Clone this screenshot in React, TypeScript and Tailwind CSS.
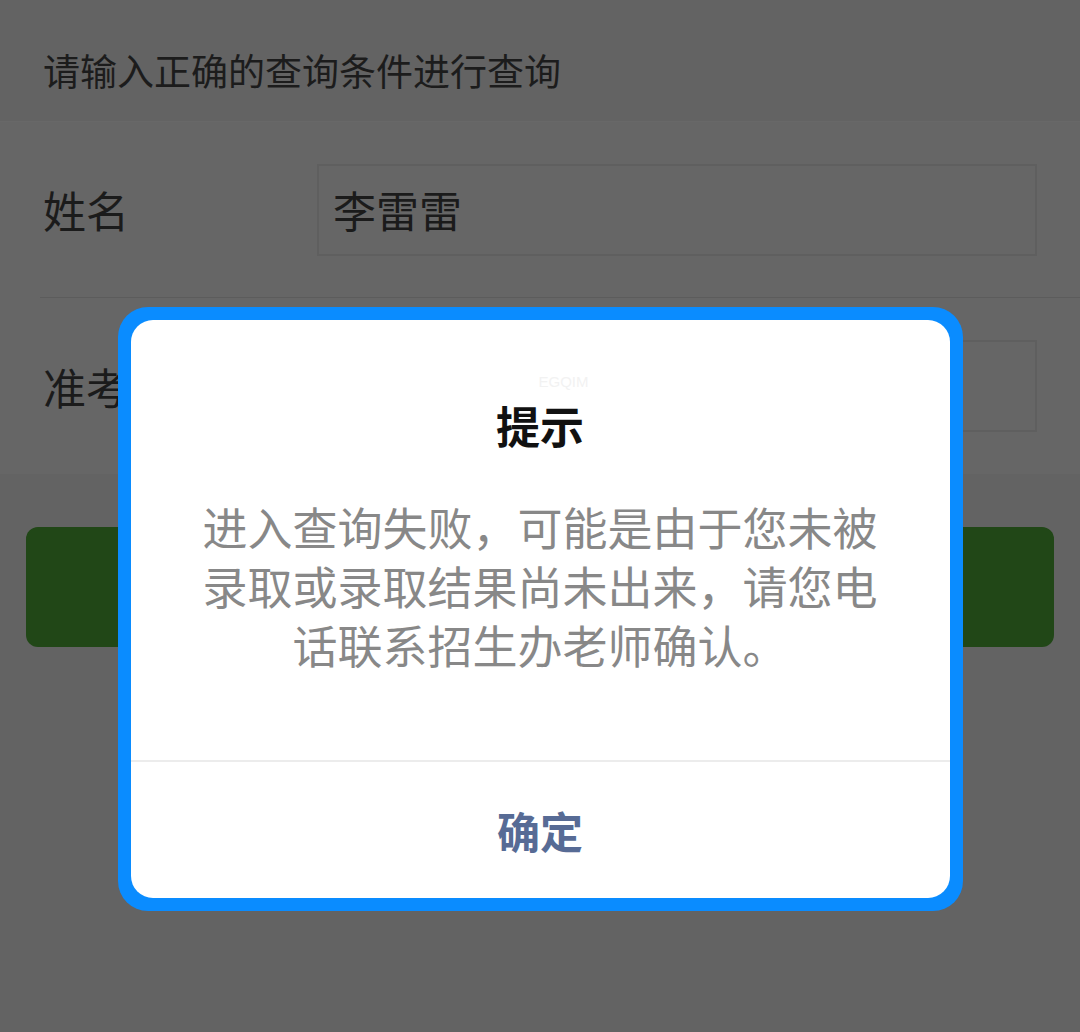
const font = "font-['Noto_Sans_CJK_SC','Noto_Sans',sans-serif]";

function FormRow({ label, value, last }: { label: string; value?: string; last?: boolean }) {
  return (
    <div className={`flex items-center ml-[40px] h-[176px] ${last ? "" : "border-b border-[#5c5c5c]"}`}>
      <div className="w-[277px] pl-[3px] text-[43px] leading-none text-[#1b1b1b]">{label}</div>
      <div className="h-[92px] w-[720px] border-2 border-[#5f5f5f] flex items-center pl-[14px] text-[43px] leading-none text-[#1b1b1b]">
        {value}
      </div>
    </div>
  );
}

export default function App() {
  return (
    <div className={`relative w-[1080px] h-[1032px] overflow-hidden bg-[#636363] ${font}`}>
      {/* page behind the mask */}
      <div className="h-[122px] pl-[43px] pt-[52px] text-[37px] leading-none text-[#1c1c1c] border-b border-[#686868]">
        请输入正确的查询条件进行查询
      </div>
      <div className="bg-[#666666]">
        <FormRow label="姓名" value="李雷雷" />
        <FormRow label="准考证号" last />
      </div>
      <div className="px-[26px] pt-[53px]">
        <div className="h-[120px] rounded-[12px] bg-[#214717]" />
      </div>

      {/* dialog */}
      <div className="absolute inset-0 flex justify-center items-start pt-[307px]">
        <div className="w-[845px] rounded-[30px] bg-[#0a8cff] p-[13px]">
          <div className="relative rounded-[22px] bg-white overflow-hidden">
            <div className="absolute left-[408px] top-[54px] text-[15px] leading-none text-[#f2f2f2] font-['Liberation_Sans',sans-serif]">
              EGQIM
            </div>
            <div className="pt-[83px] text-center text-[44px] leading-none font-bold text-[#111111]">提示</div>
            <div className="mt-[50px] px-[68px] pb-[86px] text-center text-[45px] leading-[59px] text-[#888888]">
              进入查询失败，可能是由于您未被
              <br />
              录取或录取结果尚未出来，请您电
              <br />
              话联系招生办老师确认。
            </div>
            <div className="h-[138px] border-t-2 border-[#ececec] flex items-center justify-center text-[43px] leading-none font-semibold text-[#576b95]">
              确定
            </div>
          </div>
        </div>
      </div>
    </div>
  );
}
